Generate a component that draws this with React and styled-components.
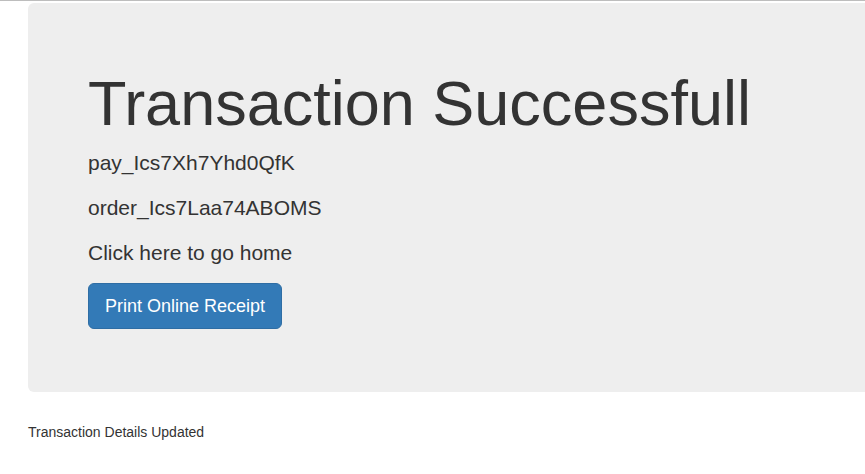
import styled, { createGlobalStyle } from "styled-components";

const GlobalStyle = createGlobalStyle`
  html {
    overflow-x: hidden;
  }
  body {
    margin: 0;
    font-family: "Liberation Sans", Arial, Helvetica, sans-serif;
    font-size: 14px;
    line-height: 1.42857143;
    color: #333;
    background: #fff;
  }
  * {
    box-sizing: border-box;
  }
`;

const TopRule = styled.div`
  height: 1px;
  background: #bdbdbd;
`;

const Page = styled.div`
  padding: 2px 0 0 28px;
  overflow: hidden;
`;

const Jumbotron = styled.section`
  width: 1170px;
  padding: 48px 60px;
  margin-bottom: 30px;
  background: #eee;
  border-radius: 6px;
`;

const Title = styled.h1`
  font-size: 63px;
  font-weight: 500;
  line-height: 1.1;
  margin: 18px 0 10px;
`;

const Lead = styled.p`
  font-size: 21px;
  line-height: 30px;
  margin: 0 0 15px;
`;

const HomeLink = styled.a`
  color: inherit;
  text-decoration: none;
`;

const Button = styled.button`
  display: inline-block;
  padding: 10px 16px;
  font-family: inherit;
  font-size: 18px;
  line-height: 24px;
  color: #fff;
  background: #337ab7;
  border: 1px solid #2e6da4;
  border-radius: 6px;
  cursor: pointer;
  vertical-align: middle;
`;

const Note = styled.p`
  margin: 0;
`;

export default function App() {
  return (
    <>
      <GlobalStyle />
      <TopRule />
      <Page>
        <Jumbotron>
          <Title>Transaction Successfull</Title>
          <Lead>pay_Ics7Xh7Yhd0QfK</Lead>
          <Lead>order_Ics7Laa74ABOMS</Lead>
          <Lead>
            <HomeLink href="#">Click here to go home</HomeLink>
          </Lead>
          <Lead>
            <Button>Print Online Receipt</Button>
          </Lead>
        </Jumbotron>
        <Note>Transaction Details Updated</Note>
      </Page>
    </>
  );
}
